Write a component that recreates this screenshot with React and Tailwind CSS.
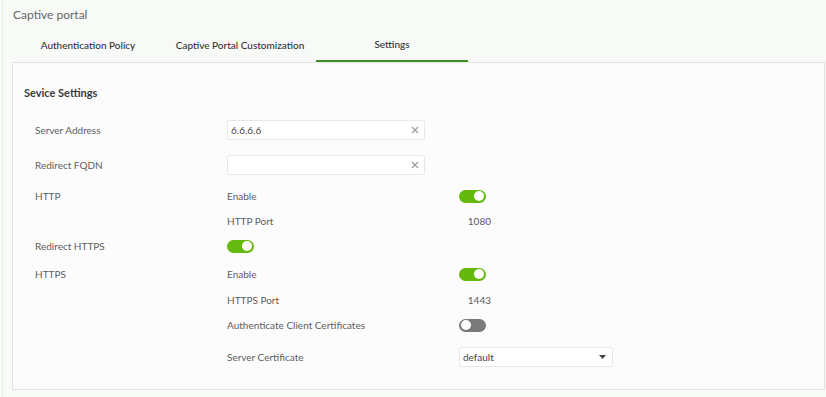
import React from 'react';

const Toggle = ({ on }) => (
    <div className={`relative w-[27px] h-[13px] rounded-full ${on ? 'bg-[#64b80e]' : 'bg-[#7a7a7a]'}`}>
        <div className={`absolute top-[1.5px] w-[10px] h-[10px] rounded-full bg-white ${on ? 'right-[2px]' : 'left-[2px]'}`} />
    </div>
);

const ClearIcon = () => (
    <svg width="8" height="8" viewBox="0 0 8 8" className="shrink-0">
        <path d="M1 1L7 7M7 1L1 7" stroke="#9a9a9a" strokeWidth="1.1" />
    </svg>
);

const TextInput = ({ value }) => (
    <div className="w-[198px] h-[20px] flex items-center justify-between pl-[3px] pr-[5px] bg-white border border-[#e8e8e8] rounded-[2px] text-[10px] text-[#444]">
        <span>{value}</span>
        <ClearIcon />
    </div>
);

const Row = ({ label, mid, right, className = '' }) => (
    <div className={`flex items-center h-[20px] text-[10px] text-[#5c5c5c] ${className}`}>
        <div className="w-[192px] shrink-0">{label}</div>
        <div className="w-[232px] shrink-0 flex items-center">{mid}</div>
        <div className="flex items-center">{right}</div>
    </div>
);

const tabs = ['Authentication Policy', 'Captive Portal Customization', 'Settings'];

export default function App() {
    return (
        <div className="w-[826px] h-[397px] bg-[#f8faf7] font-['Lato',sans-serif] overflow-hidden">
            <div className="ml-[2px] h-full border-l border-[#eceeea] pl-[9px]">
                <div className="h-[30px] flex items-center pl-[1px] text-[12px] text-[#666]">Captive portal</div>
                <div className="flex h-[32px]">
                    {tabs.map((t, i) => (
                        <div
                            key={t}
                            className={`w-[152px] flex items-center justify-center pb-[1px] text-[10px] font-medium text-[#333] ${i === 2 ? 'border-b-2 border-[#3e8e2f]' : ''}`}
                        >
                            {t}
                        </div>
                    ))}
                </div>
                <div className="w-[813px] h-[328px] bg-[#fcfcfc] border border-[#e3e4e2] pt-[20px] pl-[11px]">
                    <div className="h-[20px] flex items-center text-[11px] font-bold text-[#3a3a3a]">Sevice Settings</div>
                    <div className="pl-[11px]">
                        <Row className="mt-[17px]" label="Server Address" mid={<TextInput value="6.6.6.6" />} />
                        <Row className="mt-[15px]" label="Redirect FQDN" mid={<TextInput value="" />} />
                        <Row className="mt-[11px]" label="HTTP" mid="Enable" right={<Toggle on />} />
                        <Row className="mt-[5px]" label="" mid="HTTP Port" right={<span className="w-[32px] text-right">1080</span>} />
                        <Row className="mt-[5px]" label="Redirect HTTPS" mid={<Toggle on />} />
                        <Row className="mt-[8px]" label="HTTPS" mid="Enable" right={<Toggle on />} />
                        <Row className="mt-[6px]" label="" mid="HTTPS Port" right={<span className="w-[32px] text-right">1443</span>} />
                        <Row className="mt-[5px]" label="" mid="Authenticate Client Certificates" right={<Toggle on={false} />} />
                        <Row
                            className="mt-[12px]"
                            label=""
                            mid="Server Certificate"
                            right={
                                <div className="w-[154px] h-[20px] flex items-center justify-between pl-[3px] pr-[6px] bg-white border border-[#e8e8e8] rounded-[2px] text-[10px] text-[#444]">
                                    <span>default</span>
                                    <svg width="7" height="4" viewBox="0 0 7 4">
                                        <path d="M0 0H7L3.5 4Z" fill="#444" />
                                    </svg>
                                </div>
                            }
                        />
                    </div>
                </div>
            </div>
        </div>
    );
}
